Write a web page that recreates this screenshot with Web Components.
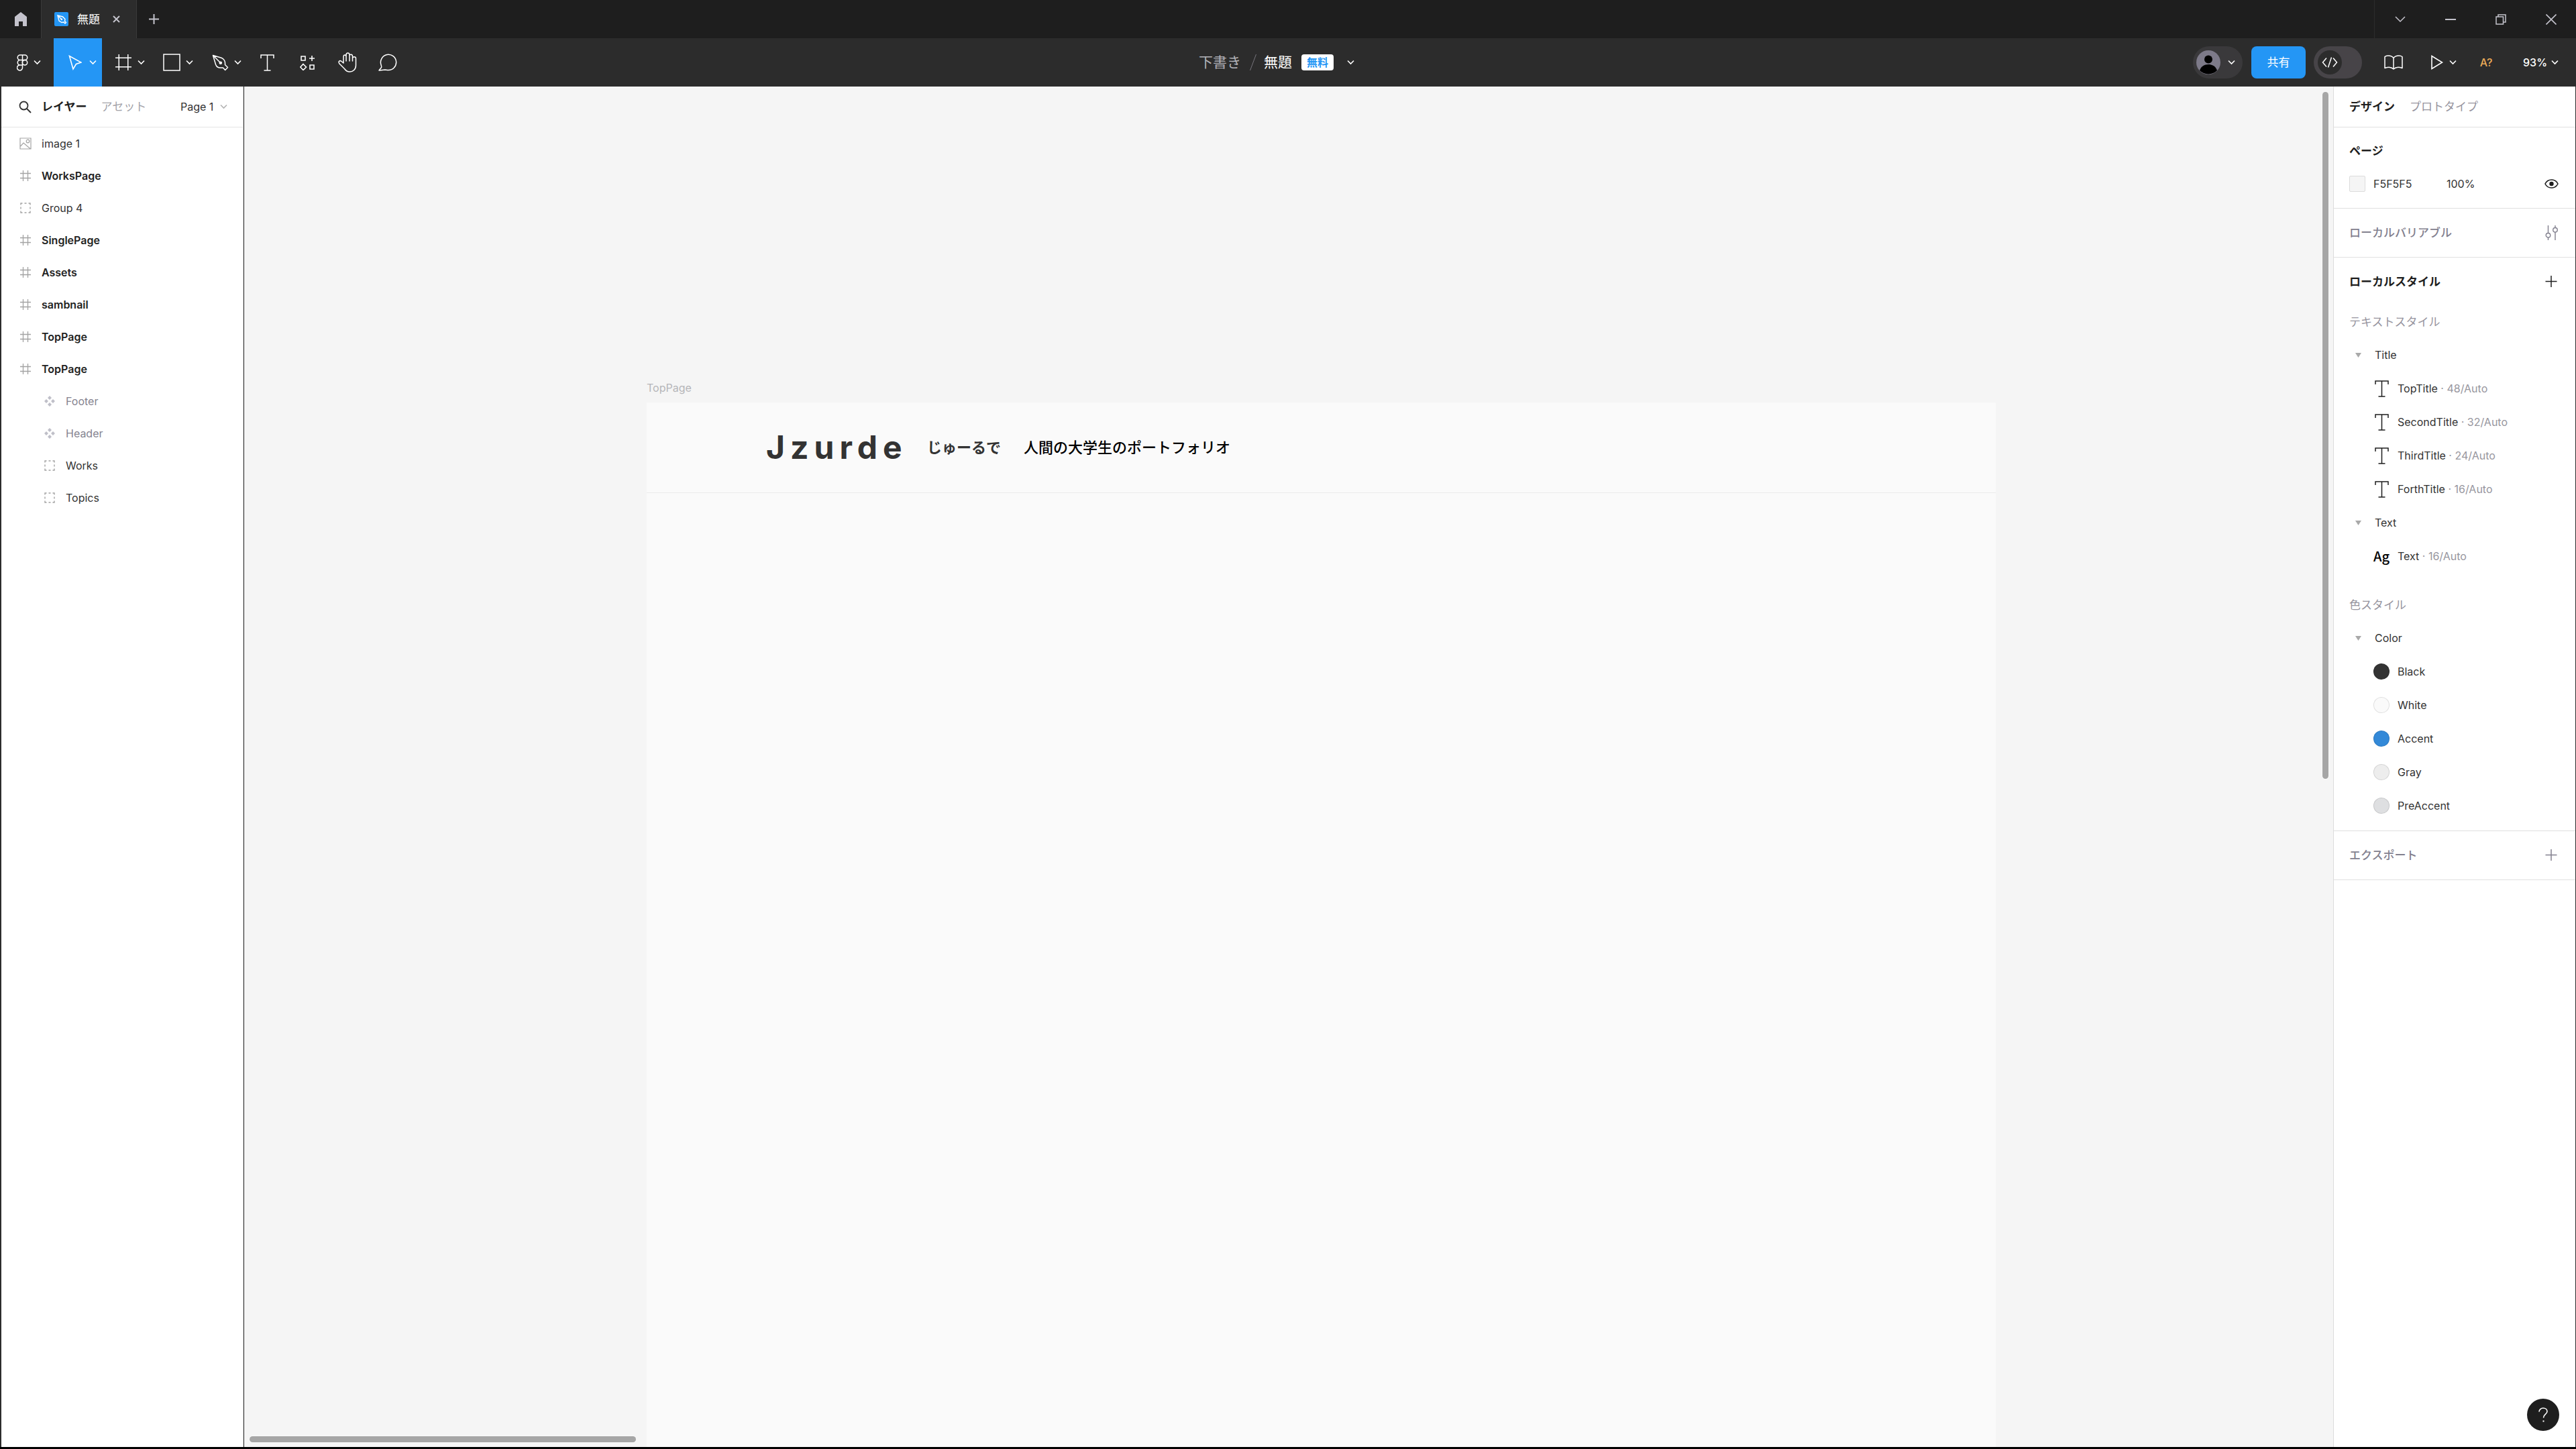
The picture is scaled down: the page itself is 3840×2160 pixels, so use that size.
<!DOCTYPE html>
<html lang="ja">
<head>
<meta charset="utf-8">
<meta name="viewport" content="width=device-width, initial-scale=1">
<title>無題</title>
<style>
html, body { margin: 0; height: 100%; }
body {
  font-family: Inter, "Noto Sans CJK JP", sans-serif;
  font-size: 16px;
  line-height: 24px;
  color: #333;
  background: #000;
  overflow: hidden;
}
</style>
</head>
<body>
<design-app></design-app>
<script>
const RESET = `
  :host, *, *::before, *::after { box-sizing: border-box; }
  button, input, select { font: inherit; color: inherit; background: none; border: 0; margin: 0; padding: 0; appearance: none; outline: none; }
  button { display: flex; align-items: center; justify-content: center; cursor: pointer; white-space: nowrap; }
  a { color: inherit; text-decoration: none; }
  svg { display: block; }
`;

function define(name, css, html, setup) {
  customElements.define(name, class extends HTMLElement {
    constructor() {
      super();
      const root = this.attachShadow({ mode: 'open' });
      root.innerHTML = `<style>${RESET}${css}</style>${typeof html === 'function' ? html(this) : html}`;
    }
    connectedCallback() { if (setup) setup(this, this.shadowRoot); }
  });
}

const S = 'fill="none" stroke="currentColor"';
const ICONS = {
  home: [20, 22, `<path fill="currentColor" d="M10 0L1 7v14h6v-7h6v7h6V7z"/>`],
  file: [21, 21, `<rect width="21" height="21" rx="2" fill="#2496f5"/><path fill="none" stroke="#fff" stroke-width="1.4" d="M5 5l2 8 4 2.500 3-.5 2 2 1.500-1.500-2-2 .5-3L12.500 7 5 5zM5 5l5.500 5.500"/><circle cx="10.800" cy="10.800" r="1.400" fill="#fff"/>`],
  close: [11, 11, `<path ${S} stroke-width="2" d="M1 1l9 9M10 1L1 10"/>`],
  plus: [15, 15, `<path ${S} stroke-width="2" d="M7.500 0v15M0 7.500h15"/>`],
  add: [18, 18, `<path ${S} stroke-width="1.5" d="M9 0v17M.5 8.500h17"/>`],
  chevron: [11, 8, `<path ${S} stroke-width="1.6" d="M1 1.500L5.500 6 10 1.500"/>`],
  'win-chevron': [16, 10, `<path ${S} stroke-width="1.5" d="M1 1l7 7 7-7"/>`],
  'win-min': [16, 4, `<path ${S} stroke-width="2" d="M0 2h16"/>`],
  'win-restore': [16, 16, `<path ${S} stroke-width="1.500" d="M1 4h10.500v11H1zM4 4V1h11v11h-3.500"/>`],
  'win-close': [16, 16, `<path ${S} stroke-width="1.600" d="M.5.5l15 15M15.500.5l-15 15"/>`],
  figma: [17, 25, `<path ${S} stroke-width="1.500" d="M8.500 1H5a3.700 3.700 0 000 7.500h3.500zM8.500 1H12a3.700 3.700 0 010 7.500H8.500zM8.500 8.500H5A3.700 3.700 0 005 16h3.500zM8.500 16H5a4 4 0 103.500 4z"/><circle cx="12" cy="12.250" r="3.700" ${S} stroke-width="1.500"/>`],
  move: [20, 23, `<path ${S} stroke-width="1.600" stroke-linejoin="miter" d="M1.500 1.500L7 21l4.500-7.500L19 11z"/>`],
  frame: [24, 24, `<path ${S} stroke-width="1.500" d="M5.250 0v24M18.750 0v24M0 5.250h24M0 18.750h24"/>`],
  rect: [26, 26, `<path ${S} stroke-width="1.500" d="M1 1h24v24H1z"/>`],
  pen: [25, 25, `<path ${S} stroke-width="1.500" stroke-linejoin="round" d="M1.500 1.500L14 5.200c3 1 5.500 4.300 5.500 7.300v3l4 4-3.800 4-3.200-3.500h-4C9 20 6.500 18 5.500 15zM1.500 1.500L12 12"/><circle cx="12.800" cy="12.800" r="2.300" fill="currentColor"/>`],
  text: [21, 25, `<path ${S} stroke-width="1.500" d="M1 6V1h19v5M10.500 1v23M5.500 24h10"/>`],
  resources: [23, 23, `<path ${S} stroke-width="1.600" d="M2 2h6v6H2zM18 1v8M14 5h8M15 15h6v6h-6zM5 13.500l4.500 4.500L5 22.500.8 18z"/>`],
  hand: [28, 30, `<path ${S} stroke-width="1.500" stroke-linejoin="round" stroke-linecap="round" d="M8 16V6.500C8 3 12 3 12 6.500V4c0-4 5-4 5 0v1c0-2.500 4.500-2.500 4.500 1v3c0-3 5-3 5 0v10.500C26.500 25.500 22 29 17.500 29c-3.500 0-6-1.500-8-4.500L2 17c-2.500-3.500.5-5 2.500-4L8 16M12 6.500V13M17 4.500V13M21.500 8v5"/>`],
  comment: [28, 26, `<path ${S} stroke-width="1.500" stroke-linejoin="round" d="M4 16.500A11.600 11.600 0 1114.500 24.500c-2 0-3-.5-4.500-.5L1 25l3.500-4.500c.5-1 0-2.500-.5-4z"/>`],
  code: [24, 16, `<path ${S} stroke-width="1.500" d="M7 1.500L1.500 8 7 14.500M17 1.500L22.500 8 17 14.500M14.500.5l-5 15"/>`],
  book: [28, 22, `<path ${S} stroke-width="1.500" stroke-linejoin="round" d="M14 4.500C12 1.500 9 1 6 1 4 1 2.500 1.500 1 2.500v17C6 17.500 11 18 14 21c3-3 8-3.500 13-1.500v-17C25.500 1.500 24 1 22 1c-3 0-6 .5-8 3.500zV21"/>`],
  play: [18, 22, `<path ${S} stroke-width="1.600" d="M1 1.500v19L16.500 11z"/>`],
  search: [19, 19, `<circle cx="7.500" cy="7.500" r="6" ${S} stroke-width="1.800"/><path ${S} stroke-width="2" d="M12 12l6 6"/>`],
  'l-image': [18, 18, `<path ${S} stroke-width="1.200" d="M1 1h16v16H1zM1.500 13L6 8l10.500 9"/><circle cx="12.500" cy="5.500" r="2.300" ${S} stroke-width="1.200"/>`],
  'l-frame': [16, 16, `<path ${S} stroke-width="1.300" d="M4.500 0v16M11.500 0v16M0 4.500h16M0 11.500h16"/>`],
  'l-group': [16, 16, `<path ${S} stroke-width="1.400" d="M1 3.500V1h2.500M6.500 1h3M12.500 1H15v2.500M15 6.500v3M15 12.500V15h-2.500M9.500 15h-3M3.500 15H1v-2.500M1 9.500v-3"/>`],
  'l-component': [16, 16, `<path fill="currentColor" d="M8 0l3 3-3 3-3-3zM3 5l3 3-3 3-3-3zM13 5l3 3-3 3-3-3zM8 10l3 3-3 3-3-3z"/>`],
  eye: [21, 14, `<path ${S} stroke-width="1.600" d="M1 7C3 3 6.500 1 10.500 1S18 3 20 7c-2 4-5.500 6-9.500 6S3 11 1 7z"/><circle cx="10.500" cy="7" r="3.200" fill="currentColor"/>`],
  sliders: [19, 22, `<path ${S} stroke-width="1.400" d="M4.500 0v11.500M4.500 18v4M15 0v3.500M15 10v12"/><circle cx="4.500" cy="14.750" r="3.250" ${S} stroke-width="1.400"/><circle cx="15" cy="6.750" r="3.250" ${S} stroke-width="1.400"/>`],
  triangle: [9, 7, `<path fill="currentColor" d="M0 0h9L4.500 7z"/>`],
  person: [36, 36, `<circle cx="18" cy="18" r="18" fill="#7d7a89"/><circle cx="18" cy="13.500" r="6" fill="#000"/><path d="M5 30c2-6 7-9 13-9s11 3 13 9a18 18 0 01-26 0z" fill="#000"/>`],
  help: [14, 22, `<path ${S} stroke-width="1.600" d="M1 6.500A6 5.800 0 017 1c3.500 0 6 2 6 5 0 4.500-5.500 4-5.500 9.500"/><path fill="currentColor" d="M6.500 19.500h2v2h-2z"/>`]
};

customElements.define('ui-icon', class extends HTMLElement {
  constructor() {
    super();
    this.attachShadow({ mode: 'open' });
  }
  connectedCallback() {
    const [w, h, body] = ICONS[this.getAttribute('name')];
    this.shadowRoot.innerHTML = `<style>:host{display:inline-flex;flex:none;align-items:center;justify-content:center;pointer-events:none}svg{display:block}</style><svg width="${w}" height="${h}" viewBox="0 0 ${w} ${h}" aria-hidden="true">${body}</svg>`;
  }
});

define('title-bar', `
  :host { display: flex; flex: none; height: 57px; background: #1e1e1e; color: #c4c3cc; }
  .home { width: 61px; }
  .home ui-icon { width: 60px; }
  .tab { display: flex; align-items: center; width: 143px; padding-left: 19px; background: #2c2c2c; color: #fff; border-inline: 1px solid #3a3a3a; font-size: 17px; }
  .tab a { display: flex; align-items: center; gap: 13px; }
  .close { color: #c4c3cc; width: 49px; height: 48px; }
  .new { width: 50px; }
  .window { display: flex; margin-left: auto; border-left: 1px solid #2c2c2c; }
  .window button { width: 75px; }
`, `
  <button class="home" aria-label="ホーム"><ui-icon name="home"></ui-icon></button>
  <div class="tab"><a href="#"><ui-icon name="file"></ui-icon>無題</a><button class="close" aria-label="閉じる"><ui-icon name="close"></ui-icon></button></div>
  <button class="new" aria-label="新規"><ui-icon name="plus"></ui-icon></button>
  <div class="window">
    <button aria-label="タブ一覧"><ui-icon name="win-chevron"></ui-icon></button>
    <button aria-label="最小化"><ui-icon name="win-min"></ui-icon></button>
    <button aria-label="元に戻す"><ui-icon name="win-restore"></ui-icon></button>
    <button aria-label="ウィンドウを閉じる"><ui-icon name="win-close"></ui-icon></button>
  </div>
`);

define('tool-button', `
  :host { display: flex; width: 60px; }
  :host([menu]) { width: 72px; }
  :host([app]) { width: 80px; }
  :host([active]) { background: #2496f5; }
  button { width: 100%; }
  :host([menu]) button { justify-content: flex-start; padding-left: 17px; gap: 6px; }
  :host([app]) button { gap: 2px; padding-left: 18px; }
  :host([menu]) .main { width: 30px; }
`, host => `<button aria-label="${host.getAttribute('label')}"><ui-icon class="main" name="${host.getAttribute('icon')}"></ui-icon>${host.hasAttribute('menu') ? '<ui-icon name="chevron"></ui-icon>' : ''}</button>`);

define('tool-bar', `
  :host { display: flex; flex: none; height: 72px; background: #2c2c2c; color: #fff; }
  .tools { display: flex; flex: 1; }
  .file { display: flex; align-items: center; padding-right: 28px; font-size: 21px; }
  .file .drafts { color: #b3b3b9; }
  .file svg { margin: 0 11px 0 13px; }
  .badge { margin-left: 14px; padding: 0 8px; border-radius: 4px; background: #fff; color: #2496f5; font-size: 16px; font-weight: 700; }
  .file button { margin-left: 14px; padding: 12px 6px; }
  .actions { display: flex; flex: 1; justify-content: flex-end; align-items: center; }
  .user { width: 74px; height: 48px; border-radius: 24px; background: #3a393b; gap: 11px; padding-right: 6px; }
  .share { width: 81px; height: 48px; margin: 0 12px 0 13px; border-radius: 8px; background: #2496f5; font-size: 17px; }
  .dev { display: flex; position: relative; width: 72px; height: 48px; margin-right: 17px; }
  .dev input { width: 72px; height: 48px; border-radius: 24px; background: #474448; }
  .dev ui-icon { position: absolute; left: 6px; top: 6px; width: 36px; height: 36px; border-radius: 18px; background: #2c2c2c; }
  .book { width: 60px; height: 72px; }
  .play { width: 78px; height: 72px; justify-content: flex-start; padding-left: 26px; gap: 9px; }
  .fonts { width: 60px; height: 72px; color: #e8a957; font-weight: 500; }
  .zoom { display: flex; align-items: center; width: 104px; padding-left: 25px; }
  .zoom select { width: 42px; font-weight: 500; }
`, `
  <div class="tools">
    <tool-button menu app icon="figma" label="メインメニュー"></tool-button>
    <tool-button menu active icon="move" label="移動"></tool-button>
    <tool-button menu icon="frame" label="フレーム"></tool-button>
    <tool-button menu icon="rect" label="長方形"></tool-button>
    <tool-button menu icon="pen" label="ペン"></tool-button>
    <tool-button icon="text" label="テキスト"></tool-button>
    <tool-button icon="resources" label="リソース"></tool-button>
    <tool-button icon="hand" label="手のひら"></tool-button>
    <tool-button icon="comment" label="コメント"></tool-button>
  </div>
  <div class="file">
    <a class="drafts" href="#">下書き</a>
    <svg width="10" height="24" viewBox="0 0 10 24" aria-hidden="true"><path d="M9.500 0l-9 24" stroke="#77757d" fill="none"/></svg>
    <span>無題</span><span class="badge">無料</span>
    <button aria-label="ファイルメニュー"><ui-icon name="chevron"></ui-icon></button>
  </div>
  <div class="actions">
    <button class="user" aria-label="ユーザー"><ui-icon name="person"></ui-icon><ui-icon name="chevron"></ui-icon></button>
    <button class="share">共有</button>
    <label class="dev"><input type="checkbox" role="switch" aria-label="開発モード"><ui-icon name="code"></ui-icon></label>
    <button class="book" aria-label="ライブラリ"><ui-icon name="book"></ui-icon></button>
    <button class="play" aria-label="プレビュー"><ui-icon name="play"></ui-icon><ui-icon name="chevron"></ui-icon></button>
    <button class="fonts">A?</button>
    <label class="zoom"><select aria-label="ズーム"><option>93%</option></select><ui-icon name="chevron"></ui-icon></label>
  </div>
`);

define('layer-row', `
  :host { display: flex; height: 48px; }
  button { width: 100%; justify-content: flex-start; gap: 15px; padding-left: 27px; }
  ui-icon { width: 18px; color: #a3a3a3; }
  :host([top]) button { font-weight: 600; color: #222; }
  :host([child]) button { padding-left: 63px; }
  :host([muted]) button { color: #85838f; }
  :host([muted]) ui-icon { color: #bfbfc8; }
`, host => `<button><ui-icon name="l-${host.getAttribute('icon')}"></ui-icon><slot></slot></button>`);

define('layers-panel', `
  :host { display: block; flex: none; width: 362px; background: #fff; border-right: 1px solid #2c2c2c; box-shadow: inset -1px 0 #e0e0e0; }
  header { display: flex; align-items: center; height: 61px; padding: 0 24px 0 26px; border-bottom: 1px solid #e5e5e5; }
  .tab { font-size: 17px; color: #a3a3a9; }
  .tab[aria-selected=true] { color: #1e1e1e; font-weight: 700; margin: 0 21px 0 15px; }
  label { display: flex; align-items: center; margin-left: auto; }
  label ui-icon { color: #b3b3b3; }
  select { width: 59px; }
`, `
  <header>
    <button aria-label="検索"><ui-icon name="search"></ui-icon></button>
    <button class="tab" role="tab" aria-selected="true">レイヤー</button>
    <button class="tab" role="tab">アセット</button>
    <label><select aria-label="ページ"><option>Page 1</option></select><ui-icon name="chevron"></ui-icon></label>
  </header>
  <nav>
    <layer-row icon="image">image 1</layer-row>
    <layer-row icon="frame" top>WorksPage</layer-row>
    <layer-row icon="group">Group 4</layer-row>
    <layer-row icon="frame" top>SinglePage</layer-row>
    <layer-row icon="frame" top>Assets</layer-row>
    <layer-row icon="frame" top>sambnail</layer-row>
    <layer-row icon="frame" top>TopPage</layer-row>
    <layer-row icon="frame" top>TopPage</layer-row>
    <layer-row icon="component" child muted>Footer</layer-row>
    <layer-row icon="component" child muted>Header</layer-row>
    <layer-row icon="group" child>Works</layer-row>
    <layer-row icon="group" child>Topics</layer-row>
  </nav>
`);

define('canvas-view', `
  :host { display: flex; flex-direction: column; flex: 1; min-width: 0; position: relative; background: #f5f5f5; overflow: hidden; padding: 437px 503px 0 600px; }
  .name { color: #b5b5b9; line-height: 24px; margin-bottom: 10px; }
  .frame { flex: 1; background: #fafafa; }
  .head { display: flex; align-items: center; height: 135px; padding-left: 178px; border-bottom: 1px solid #ebebeb; }
  .logo { font-size: 48px; line-height: 60px; font-weight: 700; letter-spacing: 8px; color: #333; width: 240px; }
  .kana, .sub { font-size: 22px; line-height: 32px; font-weight: 700; }
  .kana { color: #333; width: 144px; }
  .sub { color: #000; font-weight: 500; }
  .thumb { position: absolute; background: #a6a6a6; border-radius: 6px; box-shadow: 0 0 0 1px #fff8; }
  .v { top: 8px; right: 7px; width: 9px; height: 50.5%; }
  .h { left: 8px; bottom: 7px; height: 9px; width: 18.5%; }
`, `
  <div class="name">TopPage</div>
  <div class="frame">
    <div class="head"><span class="logo">Jzurde</span><span class="kana">じゅーるで</span><span class="sub">人間の大学生のポートフォリオ</span></div>
  </div>
  <div class="thumb v"></div><div class="thumb h"></div>
`);

define('panel-section', `
  :host { display: block; padding: 12px 0; border-bottom: 1px solid #e0e0e0; }
  :host([compact]) { padding: 11px 0; }
  header { display: flex; align-items: center; height: 48px; padding: 0 12px 0 23px; font-size: 17px; font-weight: 700; color: #1e1e1e; }
  :host([muted]) header { color: #82808e; font-weight: 500; }
  header button { width: 48px; height: 48px; margin-left: auto; }
`, host => {
  const icon = host.getAttribute('icon');
  return `<header><span>${host.getAttribute('heading')}</span>${icon ? `<button aria-label="${host.getAttribute('action')}"><ui-icon name="${icon}"></ui-icon></button>` : ''}</header><slot></slot>`;
});

define('style-folder', `
  :host { display: block; }
  button { width: 100%; height: 50px; justify-content: flex-start; padding-left: 32px; gap: 20px; }
  ui-icon { color: #a9a9a9; }
`, host => `<button aria-expanded="true"><ui-icon name="triangle"></ui-icon>${host.getAttribute('label')}</button><slot></slot>`);

define('style-row', `
  :host { display: block; }
  button { width: 100%; height: 50px; justify-content: flex-start; padding-left: 59px; }
  .mark { display: flex; justify-content: center; width: 24px; margin-right: 12px; color: #1e1e1e; }
  .dot { width: 24px; height: 24px; border-radius: 50%; border: 1px solid #0000001a; }
  .ag { font: 500 20px/24px "Noto Sans CJK JP", sans-serif; color: #000; }
  .meta { color: #97969e; white-space: pre; }
`, host => {
  const color = host.getAttribute('color'), meta = host.getAttribute('meta');
  const mark = color ? `<span class="mark dot" style="background:${color}"></span>`
    : host.hasAttribute('ag') ? '<span class="mark ag">Ag</span>'
    : '<span class="mark"><ui-icon name="text"></ui-icon></span>';
  return `<button>${mark}<slot></slot>${meta ? `<span class="meta"> · ${meta}</span>` : ''}</button>`;
});

define('design-panel', `
  :host { display: block; flex: none; position: relative; width: 361px; background: #fff; border-left: 1px solid #dcdcdc; }
  .tabs { display: flex; align-items: center; gap: 22px; height: 61px; padding-left: 23px; border-bottom: 1px solid #e0e0e0; font-size: 17px; }
  .tabs button { color: #96949e; }
  .tabs [aria-selected=true] { color: #1e1e1e; font-weight: 700; }
  .fill { display: flex; align-items: center; height: 50px; padding: 0 12px 0 23px; }
  .swatch { width: 24px; height: 24px; background: #f5f5f5; border: 1px solid #dcdcdc; border-radius: 2px; margin-right: 12px; }
  .hex { width: 109px; }
  .alpha { width: 60px; }
  .eye { width: 48px; height: 48px; margin-left: auto; color: #1e1e1e; }
  .caption { height: 48px; line-height: 48px; margin-top: 12px; padding-left: 23px; font-size: 17px; color: #96949e; }
  .caption.second { margin-top: 24px; }
  .help { position: absolute; right: 24px; bottom: 24px; width: 48px; height: 48px; border-radius: 50%; background: #1e1e1e; color: #fff; }
`, `
  <div class="tabs" role="tablist"><button role="tab" aria-selected="true">デザイン</button><button role="tab">プロトタイプ</button></div>
  <panel-section heading="ページ" compact>
    <div class="fill"><button class="swatch" aria-label="背景色"></button><input class="hex" aria-label="カラーコード" value="F5F5F5"><input class="alpha" aria-label="不透明度" value="100%"><button class="eye" aria-label="表示"><ui-icon name="eye"></ui-icon></button></div>
  </panel-section>
  <panel-section heading="ローカルバリアブル" muted icon="sliders" action="バリアブルを開く"></panel-section>
  <panel-section heading="ローカルスタイル" icon="add" action="スタイルを追加">
    <div class="caption">テキストスタイル</div>
    <style-folder label="Title">
      <style-row meta="48/Auto">TopTitle</style-row>
      <style-row meta="32/Auto">SecondTitle</style-row>
      <style-row meta="24/Auto">ThirdTitle</style-row>
      <style-row meta="16/Auto">ForthTitle</style-row>
    </style-folder>
    <style-folder label="Text"><style-row ag meta="16/Auto">Text</style-row></style-folder>
    <div class="caption second">色スタイル</div>
    <style-folder label="Color">
      <style-row color="#333333">Black</style-row>
      <style-row color="#fafafa">White</style-row>
      <style-row color="#3389d8">Accent</style-row>
      <style-row color="#ededed">Gray</style-row>
      <style-row color="#dedfe1">PreAccent</style-row>
    </style-folder>
  </panel-section>
  <panel-section heading="エクスポート" muted icon="add" action="書き出しを追加"></panel-section>
  <button class="help" aria-label="ヘルプ"><ui-icon name="help"></ui-icon></button>
`);

define('design-app', `
  :host { display: flex; flex-direction: column; height: 100vh; padding-bottom: 3px; background: #000; }
  main { display: flex; flex: 1; min-height: 0; border: solid #2c2c2c; border-width: 0 1px 0 2px; }
`, `
  <title-bar></title-bar>
  <tool-bar></tool-bar>
  <main><layers-panel></layers-panel><canvas-view></canvas-view><design-panel></design-panel></main>
`);
</script>
</body>
</html>
